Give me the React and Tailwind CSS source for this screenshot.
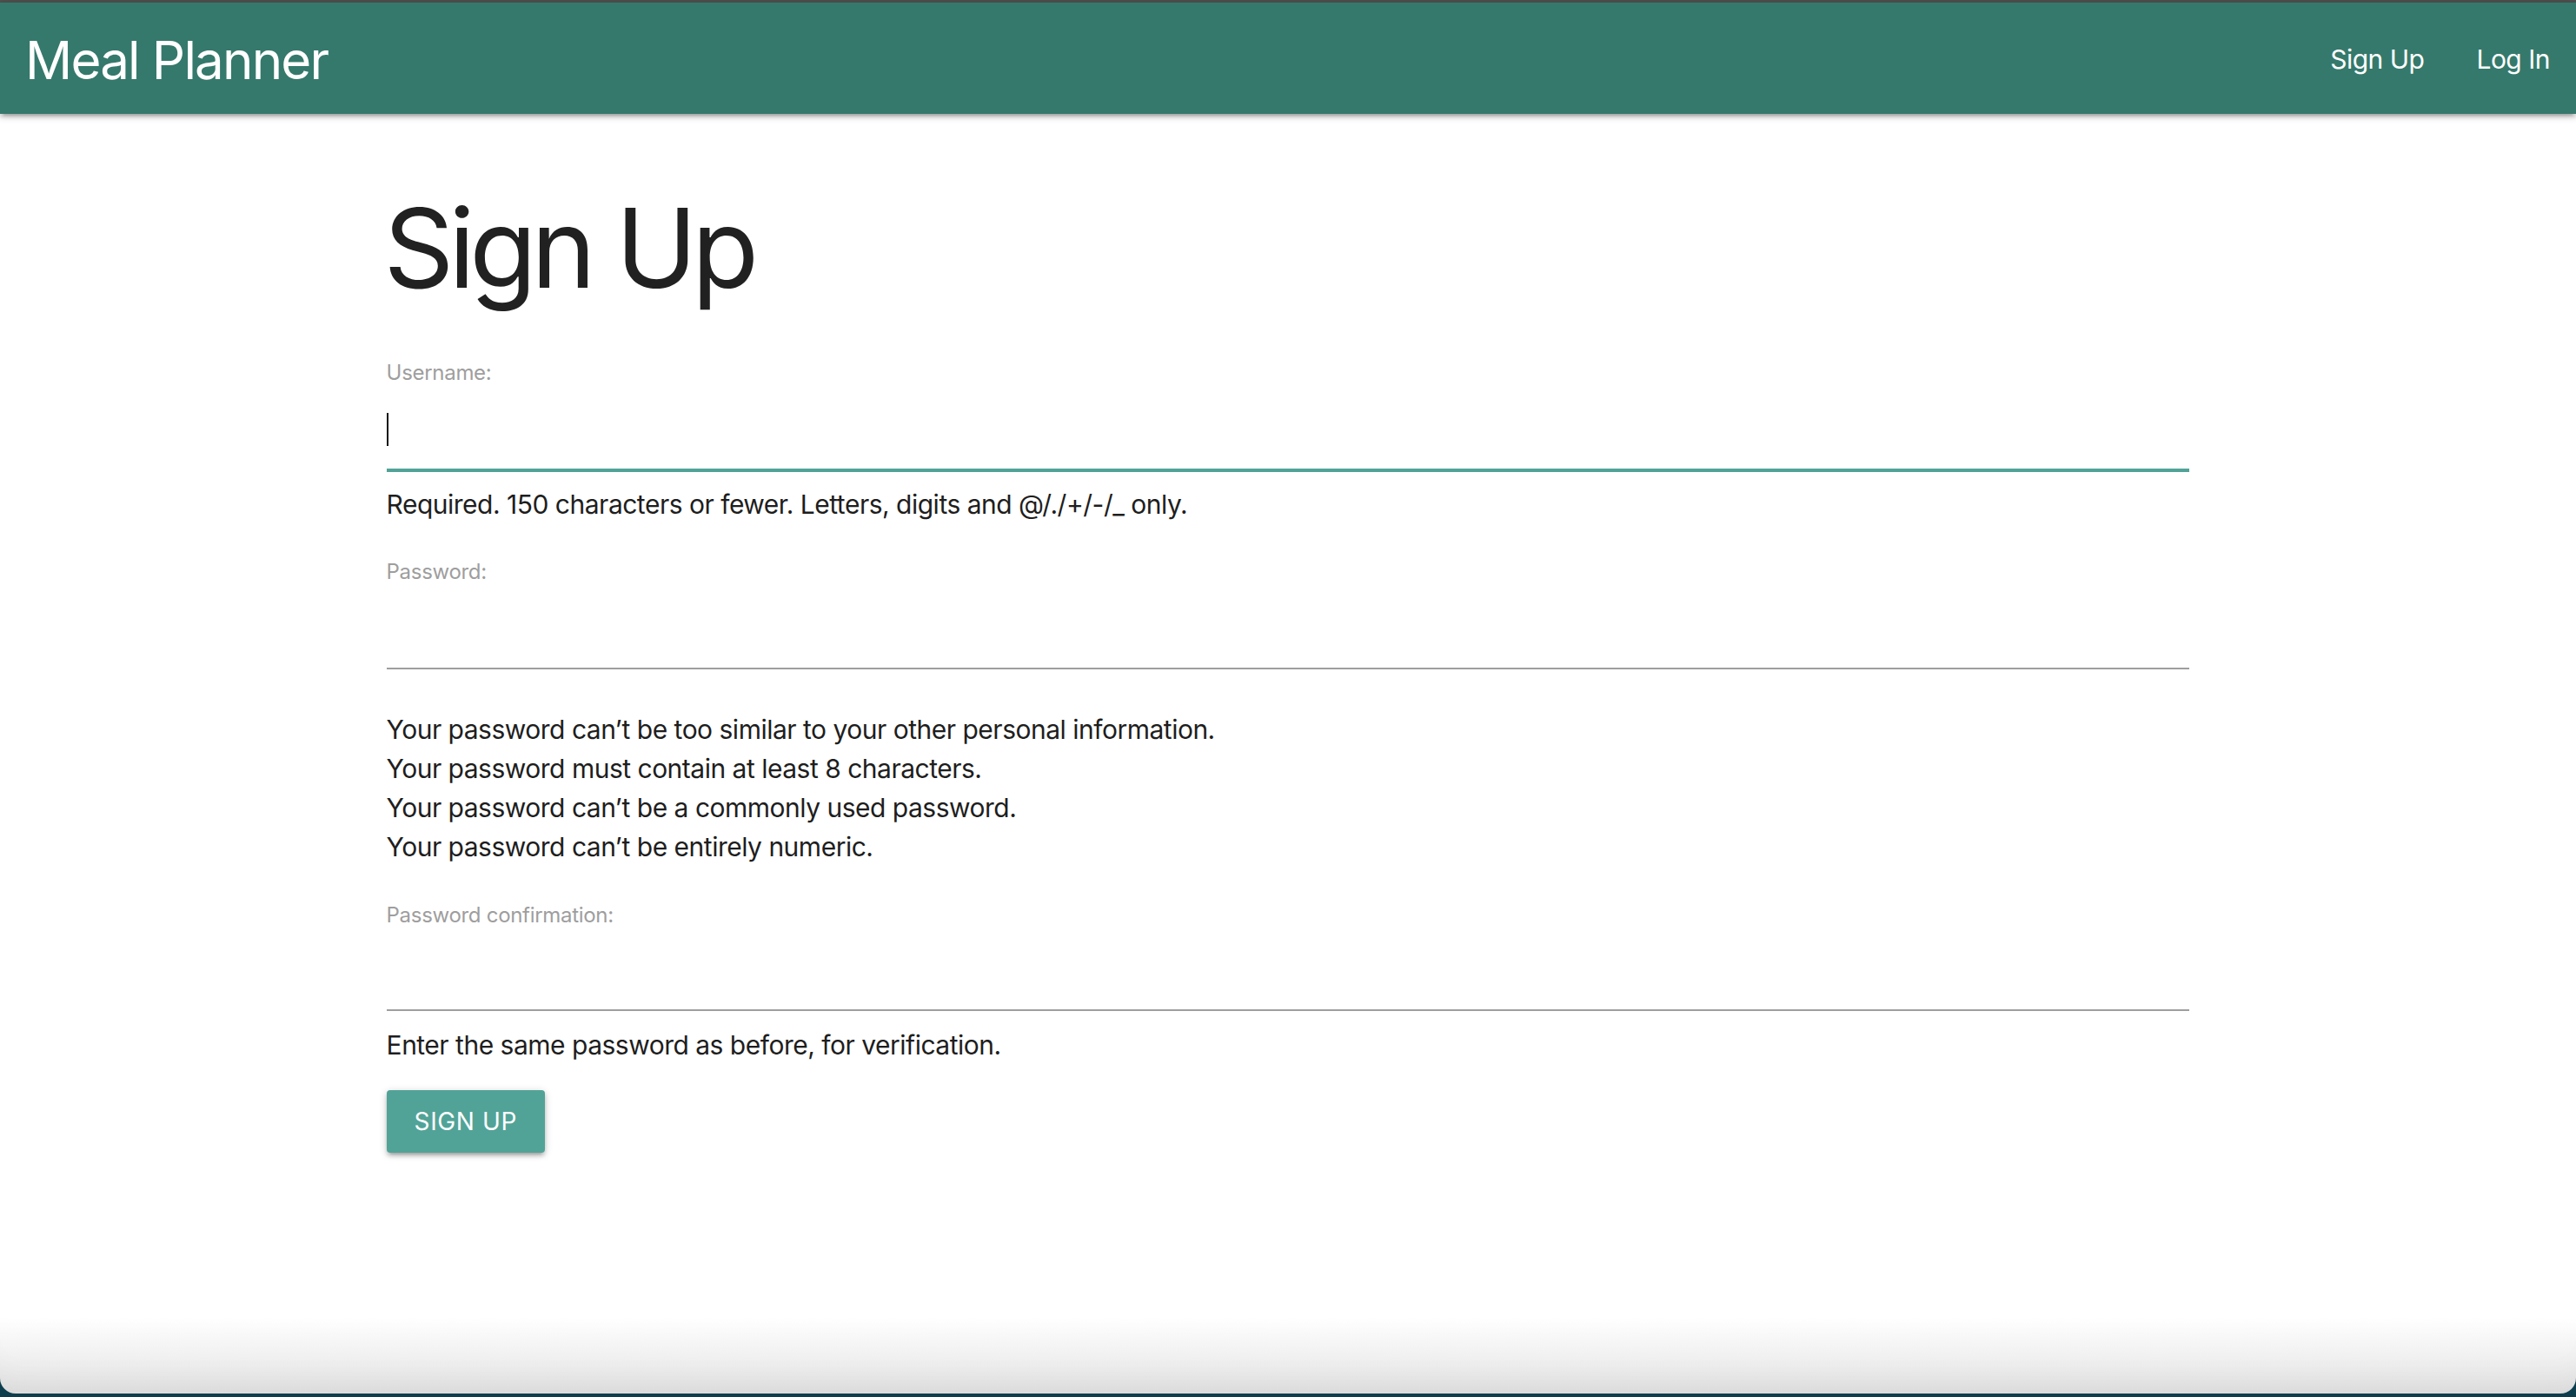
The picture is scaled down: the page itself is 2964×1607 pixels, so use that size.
import React from 'react';

const FONT = { fontFamily: 'Inter, "Liberation Sans", Arial, sans-serif' };

const PASSWORD_RULES = [
  'Your password can’t be too similar to your other personal information.',
  'Your password must contain at least 8 characters.',
  'Your password can’t be a commonly used password.',
  'Your password can’t be entirely numeric.',
];

const FieldLabel = ({ children, className = '' }) => (
  <label className={`block text-[24px] leading-[24px] tracking-[-0.3px] text-[#9e9e9e] ${className}`}>{children}</label>
);

const App = () => {
  return (
    <div className="h-[1607px] flex flex-col bg-[#0d3e4e] overflow-hidden" style={FONT}>
      <div className="flex-1 flex flex-col bg-[linear-gradient(to_bottom,#ffffff_0%,#ffffff_94.5%,#e3e3e3_100%)] rounded-b-[18px] overflow-hidden shadow-[inset_0_-40px_40px_-30px_rgba(0,0,0,0.05)]">
        {/* window frame edge */}
        <div className="h-[3px] bg-[#4f4f4f]" />

        {/* Navbar */}
        <nav className="h-[128px] bg-[#35796c] flex items-center justify-between pl-[29px] pr-[30px] shadow-[0_4px_4px_0_rgba(0,0,0,0.14),0_6px_2px_-4px_rgba(0,0,0,0.12),0_2px_10px_0_rgba(0,0,0,0.2)] relative z-10">
          <a href="#" className="text-white text-[60px] leading-none tracking-[-0.03em] pt-[4px]">Meal Planner</a>
          <ul className="flex items-center gap-[60px] text-white text-[30px] leading-none tracking-[-0.5px] pt-[2px]">
            <li><a href="#">Sign Up</a></li>
            <li><a href="#">Log In</a></li>
          </ul>
        </nav>

        {/* Form */}
        <main className="flex-1">
          <div className="w-[70%] mx-auto">
            <h3 className="mt-[85px] text-[126px] leading-[138px] text-[#212121] tracking-[-0.05em] -ml-[3px]">Sign Up</h3>

            <form className="flex flex-col">
              <FieldLabel className="mt-[63px]">Username:</FieldLabel>
              <div className="mt-[8px] h-[92px] flex items-center border-b-2 border-[#52a397] shadow-[0_2px_0_0_#52a397]">
                <span className="w-[2px] h-[38px] bg-[#111]" />
              </div>
              <p className="mt-[17px] text-[30px] leading-[45px] tracking-[-0.5px] text-[#1e1e1e]">
                Required. 150 characters or fewer. Letters, digits and @/./+/-/_ only.
              </p>

              <FieldLabel className="mt-[43px]">Password:</FieldLabel>
              <input
                type="password"
                className="mt-[8px] h-[92px] w-full border-b-2 border-[#9e9e9e] outline-none bg-transparent text-[32px]"
              />
              <ul className="mt-[47px] text-[30px] leading-[45px] tracking-[-0.5px] text-[#1e1e1e]">
                {PASSWORD_RULES.map((rule) => (
                  <li key={rule}>{rule}</li>
                ))}
              </ul>

              <FieldLabel className="mt-[44px]">Password confirmation:</FieldLabel>
              <input
                type="password"
                className="mt-[6px] h-[92px] w-full border-b-2 border-[#9e9e9e] outline-none bg-transparent text-[32px]"
              />
              <p className="mt-[17px] text-[30px] leading-[45px] tracking-[-0.5px] text-[#1e1e1e]">
                Enter the same password as before, for verification.
              </p>

              <div className="mt-[29px]">
                <button
                  type="button"
                  className="h-[72px] px-[32px] rounded-[4px] bg-[#52a397] text-white text-[28px] uppercase tracking-[0.6px] shadow-[0_4px_4px_0_rgba(0,0,0,0.14),0_6px_2px_-4px_rgba(0,0,0,0.12),0_2px_10px_0_rgba(0,0,0,0.2)]"
                >
                  Sign Up
                </button>
              </div>
            </form>
          </div>
        </main>
      </div>
      <div className="h-[4px] shrink-0" />
    </div>
  );
};

export default App;
